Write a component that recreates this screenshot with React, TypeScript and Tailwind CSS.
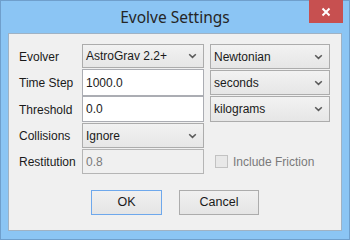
import React from "react";

const font = { fontFamily: '"Liberation Sans", Arial, sans-serif' };

function Chevron() {
  return (
    <svg width="9" height="6" viewBox="0 0 9 6" className="shrink-0">
      <path d="M1.2 1.2 L4.5 4.4 L7.8 1.2" fill="none" stroke="#5a5a5a" strokeWidth="1.5" />
    </svg>
  );
}

function Combo({ value, className = "" }: { value: string; className?: string }) {
  return (
    <div
      className={`flex items-center justify-between border border-[#acacac] bg-gradient-to-b from-[#f2f2f2] to-[#e6e6e6] pl-[3px] pr-[6px] text-[12px] text-[#1a1a1a] ${className}`}
    >
      <span>{value}</span>
      <Chevron />
    </div>
  );
}

function Field({ value, className = "" }: { value: string; className?: string }) {
  return (
    <div
      className={`flex items-center border border-[#abadb3] bg-white pl-[3px] text-[12px] text-[#1a1a1a] ${className}`}
    >
      {value}
    </div>
  );
}

function Label({ children }: { children: string }) {
  return <div className="flex items-center text-[12px] text-[#1a1a1a]">{children}</div>;
}

export default function App() {
  return (
    <div
      className="flex h-[240px] w-[350px] flex-col border border-[#6f9fcc] bg-[#8bc5f4]"
      style={font}
    >
      {/* title bar */}
      <div className="relative flex h-[32px] shrink-0 items-center justify-center">
        <span
          className="pt-[1px] text-[15.5px] text-[#262626]"
          style={{ fontFamily: '"Noto Sans", "Open Sans", sans-serif' }}
        >
          Evolve Settings
        </span>
        <div className="absolute right-[6px] top-[-1px] flex h-[23px] w-[34px] items-center justify-center bg-[#c75050]">
          <svg width="10" height="10" viewBox="0 0 10 10">
            <path d="M1.5 1.5 L8.5 8.5 M8.5 1.5 L1.5 8.5" stroke="#fff" strokeWidth="2" />
          </svg>
        </div>
      </div>

      {/* client area */}
      <div className="mx-[7px] flex h-[198px] flex-col border border-[#9fb2c4] bg-[#f0f0f0] pl-[10px] pt-[10px]">
        <div className="grid grid-cols-[63px_122px_6px_120px] grid-rows-[25px_27px_27px_26px_25px]">
          <Label>Evolver</Label>
          <Combo value="AstroGrav 2.2+" className="h-[24px] self-start" />
          <div />
          <Combo value="Newtonian" className="h-[25px] self-start" />

          <Label>Time Step</Label>
          <Field value="1000.0" className="h-[27px]" />
          <div />
          <Combo value="seconds" className="mt-[1px] h-[25px] self-start" />

          <Label>Threshold</Label>
          <Field value="0.0" className="h-[26px] self-start" />
          <div />
          <Combo value="kilograms" className="h-[26px] self-start" />

          <Label>Collisions</Label>
          <Combo value="Ignore" className="h-[25px] self-start" />
          <div />
          <div />

          <Label>Restitution</Label>
          <div className="flex h-[25px] items-center border border-[#b5b5b5] pl-[3px] text-[12px] text-[#7a7a7a]">
            0.8
          </div>
          <div />
          <div className="flex items-center gap-[5px] pl-[5px]">
            <div className="h-[13px] w-[13px] border border-[#c2c2c2] bg-[#e8e8e8]" />
            <span className="text-[12px] text-[#7a7a7a]">Include Friction</span>
          </div>
        </div>

        <div className="mt-[16px] flex justify-center gap-[17px] pr-[10px]">
          <div className="flex h-[25px] w-[71px] items-center justify-center border border-[#6ea8ec] bg-gradient-to-b from-[#f0f0f0] to-[#e5e5e5] text-[12.5px] text-[#1a1a1a]">
            OK
          </div>
          <div className="flex h-[25px] w-[80px] items-center justify-center border border-[#acacac] bg-gradient-to-b from-[#f0f0f0] to-[#e5e5e5] text-[12.5px] text-[#1a1a1a]">
            Cancel
          </div>
        </div>
      </div>
    </div>
  );
}
